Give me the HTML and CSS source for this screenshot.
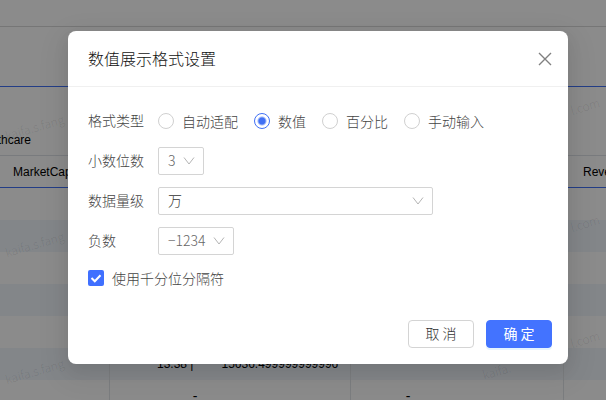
FILE: index.html
```
<!DOCTYPE html>
<html lang="zh-CN">

<head>
    <meta charset="UTF-8">
    <meta name="viewport" content="width=device-width, initial-scale=1.0">
    <title>数值展示格式设置</title>
    <link rel="stylesheet" href="styles.css">
</head>

<body>
    <div class="page">
        <div class="toolbar"></div>
        <table class="sheet">
            <colgroup>
                <col class="col-cap">
                <col class="col-wide">
                <col class="col-mid">
                <col>
            </colgroup>
            <thead>
                <tr class="group">
                    <th colspan="4">Healthcare</th>
                </tr>
                <tr class="names">
                    <th>MarketCap</th>
                    <th></th>
                    <th></th>
                    <th>Revenue</th>
                </tr>
            </thead>
            <tbody>
                <tr><td></td><td></td><td></td><td></td></tr>
                <tr><td></td><td></td><td></td><td></td></tr>
                <tr><td></td><td></td><td></td><td></td></tr>
                <tr><td></td><td></td><td></td><td></td></tr>
                <tr><td></td><td></td><td></td><td></td></tr>
                <tr>
                    <td></td>
                    <td class="pair"><span>13.38 |</span><span>15636.499999999996</span></td>
                    <td></td>
                    <td></td>
                </tr>
                <tr><td></td><td class="empty">-</td><td class="empty">-</td><td></td></tr>
            </tbody>
        </table>
        <div class="marks" aria-hidden="true">
            <span class="mark left row1">kaifa.s.fang</span>
            <span class="mark left row2">kaifa.s.fang</span>
            <span class="mark left row3">kaifa.s.fang</span>
            <span class="mark right row1">l.com</span>
            <span class="mark right row2">l.com</span>
            <span class="mark right row3">l.com</span>
            <span class="mark mid row3">kaifa.</span>
        </div>
    </div>

    <div class="mask">
        <form class="modal" role="dialog" aria-labelledby="title">
            <div class="header">
                <h1 id="title">数值展示格式设置</h1>
                <button type="button" class="close" aria-label="关闭">
                    <svg width="14" height="14" viewBox="0 0 14 14"><path d="M1 1l12 12M13 1l-12 12"/></svg>
                </button>
            </div>
            <div class="content">
                <div class="item" role="radiogroup" aria-labelledby="type">
                    <span id="type">格式类型</span>
                    <div class="radios">
                        <label><input type="radio" name="type">自动适配</label>
                        <label><input type="radio" name="type" checked>数值</label>
                        <label><input type="radio" name="type">百分比</label>
                        <label><input type="radio" name="type">手动输入</label>
                    </div>
                </div>
                <div class="item">
                    <label for="digits">小数位数</label>
                    <div class="select small">
                        <select id="digits"><option>3</option></select>
                        <svg width="12" height="12" viewBox="0 0 12 12"><path d="M1 2.5l5 6.5 5-6.5"/></svg>
                    </div>
                </div>
                <div class="item">
                    <label for="unit">数据量级</label>
                    <div class="select large">
                        <select id="unit"><option>万</option></select>
                        <svg width="12" height="12" viewBox="0 0 12 12"><path d="M1 2.5l5 6.5 5-6.5"/></svg>
                    </div>
                </div>
                <div class="item">
                    <label for="negative">负数</label>
                    <div class="select medium">
                        <select id="negative"><option>−1234</option></select>
                        <svg width="12" height="12" viewBox="0 0 12 12"><path d="M1 2.5l5 6.5 5-6.5"/></svg>
                    </div>
                </div>
                <label class="check">
                    <span class="box">
                        <input type="checkbox" checked>
                        <svg width="16" height="16" viewBox="0 0 16 16"><path d="M3.5 8l3.3 3.3 5.7-6"/></svg>
                    </span>
                    使用千分位分隔符
                </label>
            </div>
            <div class="footer">
                <button type="button" class="btn">取 消</button>
                <button type="submit" class="btn primary">确 定</button>
            </div>
        </form>
    </div>
</body>

</html>
```
FILE: styles.css
```
* {
    box-sizing: border-box;
}

body {
    margin: 0;
    height: 100vh;
    overflow: hidden;
    font-family: "Noto Sans CJK SC", sans-serif;
    font-size: 14px;
    font-weight: 300;
    color: #444;
}

.page {
    position: relative;
    height: 100vh;
    overflow: hidden;
    background-color: #fdfdfd;
}

.toolbar {
    height: 27px;
    margin-bottom: 59px;
    border-bottom: 1px solid #d8d8d8;
}

/* table is scrolled to the right by 40px */
.sheet {
    width: calc(100% + 40px);
    margin-left: -40px;
    table-layout: fixed;
    border-collapse: separate;
    border-spacing: 0;
    border-top: 1px solid #4070f4;
    font-family: "Liberation Sans", Arial, sans-serif;
    font-size: 12px;
    font-weight: 400;
    color: #000;
}

.col-cap {
    width: 150px;
}

.col-wide {
    width: 241px;
}

.col-mid {
    width: 213px;
}

.sheet th {
    padding: 0 19px;
    font-weight: 400;
    text-align: left;
    white-space: nowrap;
}

.sheet .group th {
    height: 69px;
    padding: 38px 13px 0;
    border-bottom: 1px solid #dde1e6;
}

.names th {
    height: 32px;
    border-bottom: 1px solid #4070f4;
}

.sheet .names th:first-child {
    padding-left: 53px;
}

.sheet td {
    height: 32px;
    padding: 0;
    border-right: 1px solid #e0e3e8;
}

.sheet td:last-child {
    border-right: 0;
}

.sheet tbody tr:nth-child(even) {
    background-color: #eef4fa;
}

.pair span {
    margin-left: 47px;
}

.pair span + span {
    margin-left: 28px;
}

.sheet .empty {
    padding-right: 70px;
    font-size: 14px;
    text-align: center;
}

.sheet .empty + .empty {
    padding-right: 98px;
}

.mark {
    position: absolute;
    font-size: 12px;
    color: rgba(0, 0, 0, 0.1);
    transform: rotate(-16deg);
}

.left {
    left: 4px;
}

.mid {
    left: 482px;
}

.right {
    right: 6px;
}

.row1 {
    top: 118px;
}

.row2 {
    top: 235px;
}

.row3 {
    top: 362px;
}

.right.row1 {
    top: 97px;
}

.right.row2 {
    top: 214px;
}

.right.row3 {
    top: 330px;
}

.mask {
    position: absolute;
    inset: 0;
    display: flex;
    align-items: flex-start;
    padding: 31px 38px 0 68px;
    background-color: rgba(0, 0, 0, 0.45);
}

.modal {
    flex: 1;
    background-color: #fff;
    border-radius: 8px;
    box-shadow: 0 6px 16px rgba(0, 0, 0, 0.08), 0 9px 28px 8px rgba(0, 0, 0, 0.05);
}

.header {
    display: flex;
    align-items: center;
    justify-content: space-between;
    height: 56px;
    padding: 0 16px 0 20px;
    border-bottom: 1px solid #f0f0f0;
}

h1 {
    margin: 0;
    padding-bottom: 2px;
    font-size: 16px;
    font-weight: 300;
    color: #111;
}

.close {
    display: flex;
    padding: 0;
    border: 0;
    background: none;
}

svg {
    fill: none;
    stroke: #b4b4b4;
    pointer-events: none;
}

.close svg {
    stroke: #808080;
    stroke-width: 1.4;
}

.content {
    display: grid;
    gap: 12px;
    padding: 20px;
}

.item {
    display: grid;
    grid-template-columns: 56px 1fr;
    gap: 14px;
    align-items: center;
    height: 28px;
}

.item > label,
.item > span {
    padding-bottom: 2px;
}

.radios {
    display: flex;
    gap: 16px;
}

.radios label {
    display: flex;
    align-items: center;
    gap: 8px;
}

input {
    appearance: none;
    width: 16px;
    height: 16px;
    margin: 0;
    border: 1px solid #d0d0d0;
    border-radius: 50%;
}

input[type="radio"]:checked {
    border-color: #4070f4;
    background: radial-gradient(circle, #4070f4 3px, #fff 5px);
}

.select {
    display: grid;
    align-items: center;
}

.select select,
.select svg {
    grid-area: 1 / 1;
}

.select svg {
    justify-self: end;
    margin-right: 9px;
}

.small {
    width: 46px;
}

.medium {
    width: 76px;
}

.large {
    width: 275px;
}

select {
    appearance: none;
    width: 100%;
    height: 28px;
    padding: 0 9px 2px;
    border: 1px solid #d4d4d4;
    border-radius: 2px;
    background-color: #fff;
    font: inherit;
    color: #666;
}

.large select {
    color: #333;
}

.check {
    display: flex;
    align-items: center;
    gap: 8px;
    height: 22px;
}

.box {
    display: grid;
}

.box input,
.box svg {
    grid-area: 1 / 1;
}

.box input {
    border: 0;
    border-radius: 2px;
    background-color: #4070ff;
}

.box svg {
    stroke: #fff;
    stroke-width: 2;
}

.footer {
    display: flex;
    justify-content: flex-end;
    gap: 12px;
    padding: 11px 16px 16px;
}

.btn {
    width: 66px;
    height: 28px;
    padding: 0 0 2px;
    border: 1px solid #d4d4d4;
    border-radius: 4px;
    background-color: #fff;
    font: inherit;
    color: #333;
}

.primary {
    border-color: #4373ff;
    background-color: #4373ff;
    box-shadow: 0 2px 0 rgba(5, 145, 255, 0.1);
    font-weight: 400;
    color: #fff;
}
```
